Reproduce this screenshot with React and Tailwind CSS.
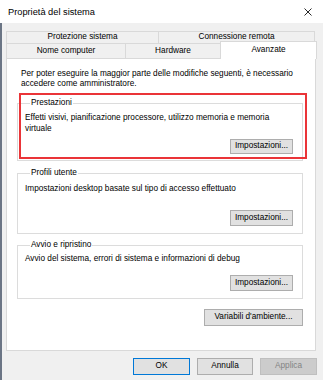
const Btn = ({ children, className = '' }) => (
  <button
    className={`flex items-center justify-center border border-[#adadad] bg-[#e1e1e1] text-[8.25px] leading-none text-black ${className}`}
  >
    {children}
  </button>
);

const Group = ({ title, className = '', children }) => (
  <fieldset className={`w-[286px] border border-[#dcdcdc] px-[7px] ${className}`}>
    <legend className="ml-[5px] px-[1px] text-[8.25px] leading-[10px]">{title}</legend>
    {children}
  </fieldset>
);

export default function App() {
  return (
    <div
      className="w-[323px] h-[380px] overflow-hidden bg-[#f0f0f0] text-black text-[8.25px]"
      style={{ fontFamily: '"Liberation Sans", Arial, sans-serif' }}
    >
      {/* Title bar */}
      <div className="h-[23px] bg-white flex items-center justify-between pl-[8px] pr-[11px]">
        <span className="text-[9.25px] leading-none mt-[2px]">Proprietà del sistema</span>
        <svg width="8" height="8" viewBox="0 0 8 8" className="mt-[1px]">
          <path d="M0.5 0.5 L7.5 7.5 M7.5 0.5 L0.5 7.5" stroke="#111" strokeWidth="0.9" fill="none" />
        </svg>
      </div>

      <div className="h-[357px] border-l-2 border-[#6b7585] pl-[4px] pt-[8px]">
        {/* Tabs row 1 */}
        <div className="flex h-[12px]">
          <div className="w-[152px] border-t border-l border-[#d9d9d9] flex items-center justify-center leading-none">
            Protezione sistema
          </div>
          <div className="w-[157px] border-t border-l border-r border-[#d9d9d9] flex items-center justify-center leading-none">
            Connessione remota
          </div>
        </div>
        {/* Tabs row 2 */}
        <div className="flex h-[15px]">
          <div className="w-[119px] border-t border-l border-[#d9d9d9] flex items-center justify-center leading-none">
            Nome computer
          </div>
          <div className="w-[95px] border-t border-l border-[#d9d9d9] flex items-center justify-center leading-none">
            Hardware
          </div>
          <div className="relative z-10 w-[97px] h-[18px] -mt-[2px] bg-white border-t border-l border-r border-[#d9d9d9] flex justify-center pt-[4px] leading-none">
            Avanzate
          </div>
        </div>

        {/* Panel */}
        <div className="relative w-[310px] h-[293px] bg-white border border-[#d9d9d9] pl-[10px] pt-[10px] flex flex-col">
          <p className="ml-[4px] leading-[10px]">
            Per poter eseguire la maggior parte delle modifiche seguenti, è necessario
            <br />
            accedere come amministratore.
          </p>

          <Group title="Prestazioni" className="mt-[9px] pb-[6px]">
            <p className="mt-[4px] leading-[11px]">
              Effetti visivi, pianificazione processore, utilizzo memoria e memoria
              <br />
              virtuale
            </p>
            <div className="flex justify-end mt-[5px] pr-[2px]">
              <Btn className="w-[63px] h-[15px]">Impostazioni...</Btn>
            </div>
          </Group>

          <Group title="Profili utente" className="mt-[7px] pb-[7px]">
            <p className="mt-[6px] leading-[10px]">
              Impostazioni desktop basate sul tipo di accesso effettuato
            </p>
            <div className="flex justify-end mt-[16px] pr-[2px]">
              <Btn className="w-[63px] h-[16px]">Impostazioni...</Btn>
            </div>
          </Group>

          <Group title="Avvio e ripristino" className="mt-[6px] pb-[7px]">
            <p className="mt-[4px] leading-[10px]">
              Avvio del sistema, errori di sistema e informazioni di debug
            </p>
            <div className="flex justify-end mt-[11px] pr-[2px]">
              <Btn className="w-[63px] h-[16px]">Impostazioni...</Btn>
            </div>
          </Group>

          <div className="w-[286px] flex justify-end mt-[10px]">
            <Btn className="w-[99px] h-[17px]">Variabili d'ambiente...</Btn>
          </div>

          {/* red highlight */}
          <div className="absolute left-[12px] top-[34px] w-[288px] h-[66px] border-2 border-[#ea3438] pointer-events-none" />
        </div>

        {/* Footer buttons */}
        <div className="flex justify-end gap-[7px] mt-[7px] pr-[6px]">
          <Btn className="w-[57px] h-[17px] !border-[#0078d7]">OK</Btn>
          <Btn className="w-[56px] h-[17px]">Annulla</Btn>
          <button className="w-[57px] h-[17px] flex items-center justify-center border border-[#bfbfbf] bg-[#cccccc] text-[8.25px] leading-none text-[#838383]">
            Applica
          </button>
        </div>
      </div>
    </div>
  );
}
